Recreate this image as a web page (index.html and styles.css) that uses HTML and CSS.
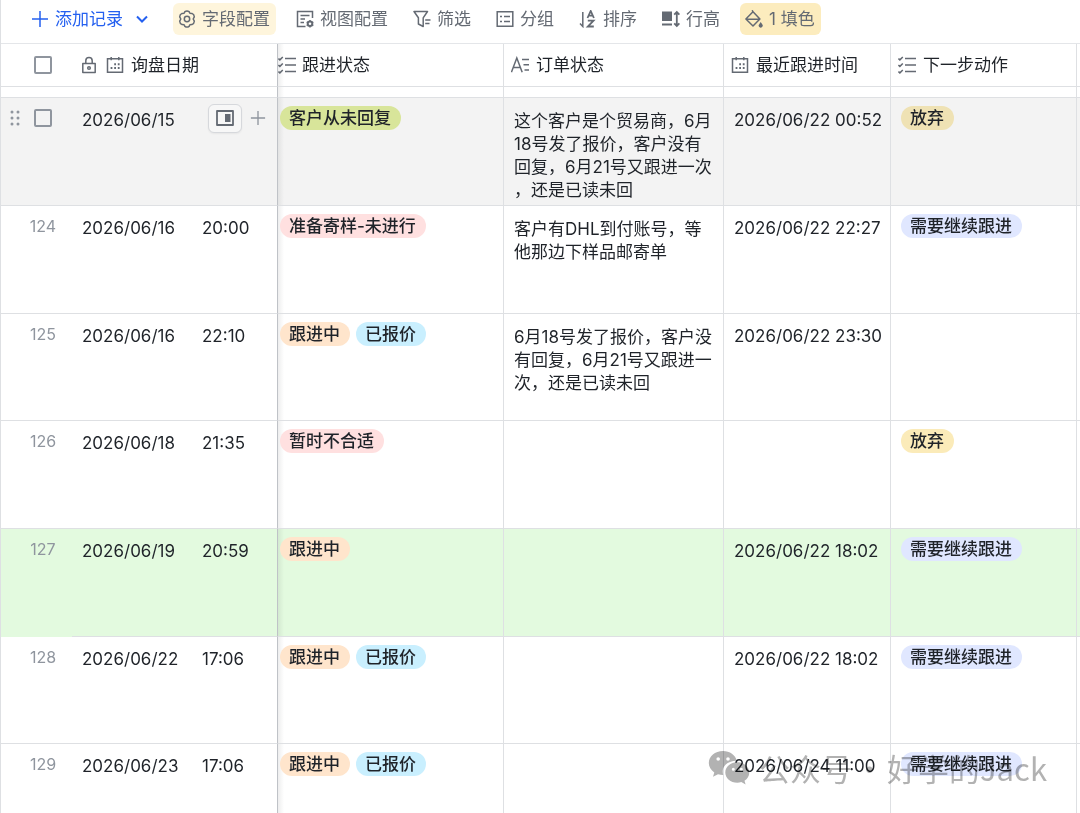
FILE: index.html
```html
<!DOCTYPE html>
<html lang="zh-CN">
<head>
<meta charset="utf-8">
<meta name="viewport" content="width=device-width, initial-scale=1">
<title>询盘跟进</title>
<link rel="stylesheet" href="styles.css">
</head>
<body>
<svg class="defs" aria-hidden="true">
  <symbol id="i-calendar" viewBox="0 0 18 18"><path d="M1.500 2.800h15v13.400h-15z M5.200 1v3.200M12.800 1v3.200"/><path d="M8.200 8.200h1.800M11.800 8.200h1.800M4.600 12h1.800M8.200 12h1.800M11.800 12h1.800" stroke-width="1.900"/></symbol>
  <symbol id="i-list" viewBox="0 0 18 18"><path d="M7 2.500h11M7 9h11M7 15.500h11M.4 2.500l1.500 1.400L4.800 1M.4 9l1.500 1.400 2.900-2.900M.4 15.500l1.500 1.400L4.800 14"/></symbol>
  <symbol id="i-plus" viewBox="0 0 18 18"><path d="M9 1v16M1 9h16"/></symbol>
</svg>
<main class="app">
  <div class="toolbar">
    <button class="tool add" type="button">
      <svg class="icon"><use href="#i-plus"/></svg><span>添加记录</span>
      <svg class="chevron" viewBox="0 0 12 12"><path d="M1 3.500l5 5 5-5"/></svg>
    </button>
    <button class="tool soft" type="button">
      <svg class="icon" viewBox="0 0 18 18"><path d="M6.900 1.600Q9 .2 11.100 1.600l.8 1.700 2 .1q2.300 1 2.400 3.400L15.200 9l1.100 2.200q-.1 2.400-2.400 3.400l-2 .1-.8 1.700q-2.100 1.400-4.200 0l-.8-1.700-2-.1q-2.300-1-2.400-3.400L2.800 9 1.700 6.800q.1-2.400 2.400-3.400l2-.1z" stroke-linejoin="round"/><circle cx="9" cy="9" r="2.700"/></svg><span>字段配置</span>
    </button>
    <button class="tool" type="button">
      <svg class="icon" viewBox="0 0 18 18"><path d="M16.500 8V1.500h-15v15h8M4.500 5.500h9M4.500 9H9M4.500 12.500h3.500"/><circle cx="14" cy="13.800" r="2.300" stroke-width="2"/><path d="M14 10v1M14 16.600v1M10.700 12l.8.400M16.500 15.200l.8.400M10.700 15.600l.8-.4M16.500 12.400l.8-.4"/></svg><span>视图配置</span>
    </button>
    <button class="tool" type="button">
      <svg class="icon" viewBox="0 0 18 18"><path d="M1 1.500h13.500L10.200 7.800v8.700L5.400 14V7.800zM12.200 10H17.500M12.200 13.500H16.500" stroke-linejoin="round"/></svg><span>筛选</span>
    </button>
    <button class="tool" type="button">
      <svg class="icon" viewBox="0 0 18 18"><path d="M1.200 1.700h15.600v14.600H1.200zM4 6.500h2M8 6.500h6M4 11.500h2M8 11.500h6"/></svg><span>分组</span>
    </button>
    <button class="tool" type="button">
      <svg class="icon" viewBox="0 0 18 18"><path d="M3.800 2v14.500L1 13.600"/><path d="M8.500 8l3.200-7 3.200 7M9.600 5.700h4.200M8.800 10.700h5.700l-5.700 5.800h6" stroke-width="1.800"/></svg><span>排序</span>
    </button>
    <button class="tool" type="button">
      <svg class="icon" viewBox="0 0 18 18"><path d="M0 1.500h10v9.500H0zM0 13.500h10v2H0z" fill="currentColor" stroke="none"/><path d="M14.800 2v14M12.200 4.600L14.800 2l2.600 2.600M12.200 13.400l2.600 2.600 2.600-2.600" stroke-width="1.800"/></svg><span>行高</span>
    </button>
    <button class="tool filled" type="button">
      <svg class="icon" viewBox="0 0 18 18"><path d="M8 1.800l6.900 7.200L8 16 .9 9zM1.200 9.300h13.400M8 2L7.200.2" stroke-linejoin="round"/><path d="M15.700 12l1.500 2.200a2 2 0 1 1-3 0z" fill="currentColor" stroke="none"/></svg><span>1 填色</span>
    </button>
  </div>

  <table class="grid">
    <colgroup><col class="c-index"><col class="c-date"><col class="c-status"><col class="c-order"><col class="c-time"><col class="c-next"><col></colgroup>
    <thead>
      <tr>
        <th class="index"><input type="checkbox" aria-label="全选"></th>
        <th class="pinned"><div class="head date-head">
          <svg class="icon lock" viewBox="0 0 16 18"><path d="M1.800 7.500h12.400v9H1.800zM4.800 7.500V4.800a3.200 3.200 0 0 1 6.400 0v2.700" stroke-linejoin="round"/><circle cx="8" cy="12" r="1.300"/></svg>
          <svg class="icon"><use href="#i-calendar"/></svg><span>询盘日期</span></div></th>
        <th class="shade"><div class="head flush"><svg class="icon"><use href="#i-list"/></svg><span>跟进状态</span></div></th>
        <th><div class="head"><svg class="icon" viewBox="0 0 18 18"><path d="M.4 16.200L5.800 2l5.400 14.200M2.300 11.500h7M11 3.500h7.500M12.500 8.700h6M13.500 14h5"/></svg><span>订单状态</span></div></th>
        <th><div class="head"><svg class="icon"><use href="#i-calendar"/></svg><span>最近跟进时间</span></div></th>
        <th><div class="head"><svg class="icon"><use href="#i-list"/></svg><span>下一步动作</span></div></th>
        <th></th>
      </tr>
    </thead>
    <tbody>
      <tr class="spacer"><td></td><td class="pinned"></td><td class="shade"></td><td></td><td></td><td></td><td></td></tr>
      <tr class="hovered">
        <td class="index"><div class="select">
          <svg class="drag" viewBox="0 0 10 16"><g fill="currentColor"><circle cx="2" cy="2" r="1.500"/><circle cx="8" cy="2" r="1.500"/><circle cx="2" cy="8" r="1.500"/><circle cx="8" cy="8" r="1.500"/><circle cx="2" cy="14" r="1.500"/><circle cx="8" cy="14" r="1.500"/></g></svg>
          <input type="checkbox" aria-label="选择记录"></div></td>
        <td class="pinned"><div class="date"><span>2026/06/15</span><span class="actions">
          <button class="expand" type="button" aria-label="展开记录"><svg viewBox="0 0 18 16"><path d="M1 1h16v14H1z" stroke-width="1.800" stroke-linejoin="round"/><path d="M9 4h5.500v8H9z" fill="currentColor" stroke="none"/></svg></button>
          <button class="more" type="button" aria-label="插入记录"><svg viewBox="0 0 18 18"><use href="#i-plus"/></svg></button></span></div></td>
        <td class="shade"><div class="tags"><span class="tag lime">客户从未回复</span></div></td>
        <td class="note">这个客户是个贸易商，6月18号发了报价，客户没有回复，6月21号又跟进一次，还是已读未回</td>
        <td class="time">2026/06/22 00:52</td>
        <td><div class="tags next"><span class="tag yellow">放弃</span></div></td><td></td>
      </tr>
      <tr>
        <td class="index">124</td>
        <td class="pinned"><div class="date"><span>2026/06/16</span><span>20:00</span></div></td>
        <td class="shade"><div class="tags"><span class="tag red">准备寄样-未进行</span></div></td>
        <td class="note">客户有DHL到付账号，等他那边下样品邮寄单</td>
        <td class="time">2026/06/22 22:27</td>
        <td><div class="tags next"><span class="tag blue">需要继续跟进</span></div></td><td></td>
      </tr>
      <tr>
        <td class="index">125</td>
        <td class="pinned"><div class="date"><span>2026/06/16</span><span>22:10</span></div></td>
        <td class="shade"><div class="tags"><span class="tag orange">跟进中</span><span class="tag cyan">已报价</span></div></td>
        <td class="note">6月18号发了报价，客户没有回复，6月21号又跟进一次，还是已读未回</td>
        <td class="time">2026/06/22 23:30</td>
        <td></td><td></td>
      </tr>
      <tr>
        <td class="index">126</td>
        <td class="pinned"><div class="date"><span>2026/06/18</span><span>21:35</span></div></td>
        <td class="shade"><div class="tags"><span class="tag red">暂时不合适</span></div></td>
        <td></td><td></td>
        <td><div class="tags next"><span class="tag yellow">放弃</span></div></td><td></td>
      </tr>
      <tr class="green">
        <td class="index">127</td>
        <td class="pinned"><div class="date"><span>2026/06/19</span><span>20:59</span></div></td>
        <td class="shade"><div class="tags"><span class="tag orange">跟进中</span></div></td>
        <td></td>
        <td class="time">2026/06/22 18:02</td>
        <td><div class="tags next"><span class="tag blue">需要继续跟进</span></div></td><td></td>
      </tr>
      <tr>
        <td class="index">128</td>
        <td class="pinned"><div class="date"><span>2026/06/22</span><span>17:06</span></div></td>
        <td class="shade"><div class="tags"><span class="tag orange">跟进中</span><span class="tag cyan">已报价</span></div></td>
        <td></td>
        <td class="time">2026/06/22 18:02</td>
        <td><div class="tags next"><span class="tag blue">需要继续跟进</span></div></td><td></td>
      </tr>
      <tr>
        <td class="index">129</td>
        <td class="pinned"><div class="date"><span>2026/06/23</span><span>17:06</span></div></td>
        <td class="shade"><div class="tags"><span class="tag orange">跟进中</span><span class="tag cyan">已报价</span></div></td>
        <td></td>
        <td class="time">2026/06/24 11:00</td>
        <td><div class="tags next"><span class="tag blue">需要继续跟进</span></div></td><td></td>
      </tr>
    </tbody>
  </table>

  <div class="watermark">
    <svg viewBox="0 0 42 36"><path fill="currentColor" fill-rule="evenodd" d="M15 1C7 1 .8 6.200.8 13c0 4 2.200 7.200 5.500 9.400L5 26.800l5-2.600c1.700.5 3.400.7 5.200.7C13 17 19 10.500 28.800 10.700 27.500 5 21.800 1 15 1zM10.200 7.200a1.800 1.800 0 1 1 0 3.600 1.800 1.800 0 0 1 0-3.600zM20 7.200a1.800 1.800 0 1 1 0 3.600 1.800 1.800 0 0 1 0-3.600z"/><path fill="currentColor" fill-rule="evenodd" d="M29.300 12.200c-6.800 0-12 4.500-12 10.200s5.200 10.300 12 10.300c1.400 0 2.800-.2 4-.6l4.300 2.300-1.100-3.700c2.900-1.900 4.800-4.900 4.800-8.300 0-5.700-5.400-10.200-12-10.200zM25.300 17.700a1.500 1.500 0 1 1 0 3 1.500 1.500 0 0 1 0-3zM33.300 17.700a1.500 1.500 0 1 1 0 3 1.500 1.500 0 0 1 0-3z"/></svg>
    <span>公众号</span><span>·</span><span>好学的Jack</span>
  </div>
</main>
</body>
</html>
```
FILE: styles.css
```css
* { box-sizing: border-box; }
body {
  margin: 0;
  background: #fff;
  color: #1f2329;
  font: 17px/23px Inter, "Noto Sans CJK SC", sans-serif;
}
button { font: inherit; color: inherit; border: 0; background: none; padding: 0; margin: 0; }
svg { fill: none; stroke: currentColor; stroke-width: 1.5; flex: none; }
.defs { position: absolute; width: 0; height: 0; }
.app {
  position: relative;
  height: 100vh;
  overflow: hidden;
  border-left: 1px solid #dee0e3;
}

.toolbar {
  display: flex;
  align-items: flex-start;
  gap: 15px;
  height: 44px;
  padding: 3px 0 0 25px;
  border-bottom: 1px solid #e4e6e9;
}
.tool {
  display: flex;
  align-items: center;
  gap: 6px;
  height: 32px;
  padding: 0 5px;
  border-radius: 6px;
  color: #646a73;
  white-space: nowrap;
}
.icon { width: 18px; height: 18px; }
.add { color: #2460f0; margin-right: 5px; }
.chevron { width: 12px; height: 12px; margin-left: 7px; stroke-width: 2; }
.soft, .filled { padding-right: 6px; }
.soft { background: #fef5dc; }
.filled { background: #fcecbe; }

.grid { width: 100%; table-layout: fixed; border-collapse: separate; border-spacing: 0; }
.c-index { width: 71px; }
.c-date { width: 206px; }
.c-status { width: 226px; }
.c-order { width: 220px; }
.c-time { width: 167px; }
.c-next { width: 186px; }
th, td { padding: 0; vertical-align: top; border-bottom: 1px solid #dee0e3; border-right: 1px solid #dee0e3; }
th { height: 43px; vertical-align: middle; text-align: left; font-weight: 400; }
th:first-child, td:first-child, th:last-child, td:last-child { border-right: 0; }
td { height: 108px; }
tr:nth-child(3n + 1) td { height: 107px; }
.grid .spacer:first-child td { height: 11px; }
.grid .pinned { border-right-color: #bfc2c7; }
.shade { background-image: linear-gradient(to right, rgba(31, 35, 41, 0.08), rgba(31, 35, 41, 0)); background-size: 6px 100%; background-repeat: no-repeat; }
.hovered { background-color: #f3f3f3; }
.green { background-color: #e3fadf; }
.green .index { border-bottom-color: #e3fadf; }

.head { display: flex; align-items: center; gap: 7px; padding-left: 7px; white-space: nowrap; }
.head .icon { color: #646a73; }
.date-head { padding-left: 9px; }
.head .lock { width: 16px; margin-right: 2px; }
.head.flush { gap: 6px; padding-left: 0; }

td.index { padding: 9px 0 0 13px; text-align: center; font-size: 16px; color: #8f959e; }
th.index { padding-left: 33px; }
input[type="checkbox"] {
  appearance: none;
  display: block;
  width: 18px;
  height: 18px;
  margin: 0;
  border: 2px solid #8f959e;
  border-radius: 2px;
  background: transparent;
}
.select { display: flex; align-items: center; gap: 14px; margin-left: -4px; padding-top: 2px; }
.drag { width: 10px; height: 16px; color: #8f959e; stroke: none; }

.date { display: grid; grid-template-columns: 120px 1fr; padding: 11px 0 0 10px; }
.actions { display: flex; align-items: center; gap: 8px; height: 18px; margin-left: 6px; }
.expand {
  display: flex;
  align-items: center;
  justify-content: center;
  flex: none;
  width: 34px;
  height: 29px;
  border: 1px solid #d6d8dc;
  border-radius: 6px;
  background: #f7f7f7;
  color: #646a73;
  box-shadow: 0 1px 2px rgba(31, 35, 41, 0.06);
}
.expand svg { width: 18px; height: 16px; }
.more { display: flex; color: #8f959e; }
.more svg { width: 16px; height: 16px; }

.tags { display: flex; gap: 5px; padding: 8px 0 0 2px; }
.next { padding-left: 10px; }
.tag { padding: 0 10px 0 9px; border-radius: 12px; line-height: 24px; font-weight: 500; white-space: nowrap; }
.tag + .tag { margin-left: 1px; }
.lime { background: #d8e59a; }
.yellow { background: #fbebb9; }
.hovered .yellow { background: #efe2b4; }
.red { background: #ffe0e0; }
.orange { background: #ffe5cc; }
.cyan { background: #c9effe; }
.blue { background: #e0e7ff; }
.note { padding: 12px 6px 0 10px; word-break: break-all; line-break: anywhere; }
.time { padding: 11px 0 0 10px; white-space: nowrap; }

.watermark {
  position: absolute;
  right: 33px;
  bottom: 24px;
  display: flex;
  align-items: center;
  gap: 2px;
  color: #b2b2b2;
  font-size: 31px;
  line-height: 42px;
  font-family: "Noto Sans CJK SC", sans-serif;
  white-space: nowrap;
  mix-blend-mode: multiply;
  pointer-events: none;
}
.watermark svg { width: 42px; height: 36px; margin-right: 7px; stroke: none; }
```
